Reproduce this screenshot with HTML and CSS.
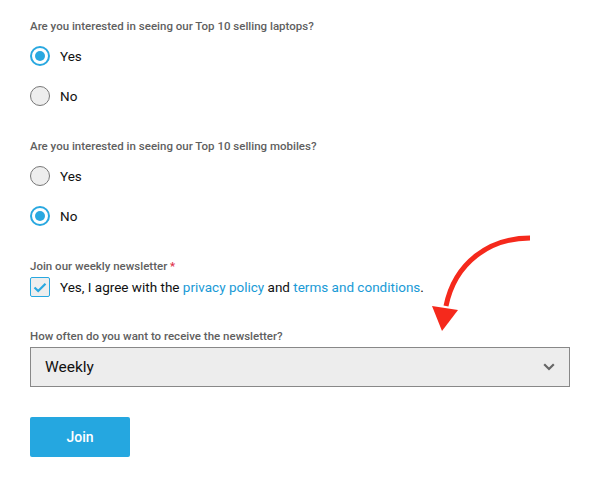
FILE: index.html
```html
<!DOCTYPE html>
<html>
<head>
<meta charset="utf-8">
<link rel="stylesheet" href="styles.css">
</head>
<body>
<form class="form">
  <fieldset class="group">
    <legend class="label">Are you interested in seeing our Top 10 selling laptops?</legend>
    <label class="option"><span class="radio checked"></span><span>Yes</span></label>
    <label class="option"><span class="radio"></span><span>No</span></label>
  </fieldset>
  <fieldset class="group">
    <legend class="label">Are you interested in seeing our Top 10 selling mobiles?</legend>
    <label class="option"><span class="radio"></span><span>Yes</span></label>
    <label class="option"><span class="radio checked"></span><span>No</span></label>
  </fieldset>
  <div class="group news">
    <div class="label">Join our weekly newsletter <span class="req">*</span></div>
    <label class="check-row">
      <span class="checkbox"><svg width="14" height="11" viewBox="0 0 14 11"><path d="M1.5 5.5 L5.2 9 L12.5 1.8" fill="none" stroke="#29a8e0" stroke-width="2.2"/></svg></span>
      <span>Yes, I agree with the <a class="link">privacy policy</a> and <a class="link">terms and conditions</a>.</span>
    </label>
  </div>
  <div class="group freq">
    <div class="label">How often do you want to receive the newsletter?</div>
    <div class="select">
      <span>Weekly</span>
      <svg class="chev" width="12" height="8" viewBox="0 0 12 8"><path d="M1.2 1.3 L6 6 L10.8 1.3" fill="none" stroke="#666" stroke-width="2.2"/></svg>
    </div>
  </div>
  <button type="button" class="btn">Join</button>
</form>
<svg class="arrow" width="600" height="483" viewBox="0 0 600 483">
  <path d="M530 238 C490 238 455 262 446 306" fill="none" stroke="#f5291c" stroke-width="5"/>
  <path d="M432 306 L458 310 L442 331 Z" fill="#f5291c"/>
</svg>
</body>
</html>
```
FILE: styles.css
```css
html, body {
  margin: 0;
  padding: 0;
  background: #fff;
}
body {
  font-family: Roboto, "Liberation Sans", sans-serif;
  color: #111;
  position: relative;
  width: 600px;
  height: 483px;
  overflow: hidden;
}
.form {
  padding: 18px 30px 0 30px;
}
.group {
  border: 0;
  margin: 0;
  padding: 0;
}
.label {
  font-size: 11.5px;
  font-weight: 500;
  color: #5f5f5f;
  padding: 0;
  height: 16px;
  line-height: 16px;
}
.option {
  display: flex;
  align-items: center;
  gap: 10px;
  height: 20px;
  font-size: 13.5px;
  margin-top: 12px;
}
.option + .option {
  margin-top: 20px;
}
.group + .group {
  margin-top: 32px;
}
.radio {
  width: 20px;
  height: 20px;
  box-sizing: border-box;
  border-radius: 50%;
  border: 1px solid #777;
  background: #eee;
  position: relative;
  flex: none;
}
.radio.checked {
  border: 2px solid #29a8e0;
  background: #fff;
}
.radio.checked::after {
  content: "";
  position: absolute;
  left: 3px;
  top: 3px;
  width: 10px;
  height: 10px;
  border-radius: 50%;
  background: #29a8e0;
}
.check-row {
  display: flex;
  align-items: center;
  gap: 10px;
  font-size: 13.5px;
  margin-top: 3px;
  height: 20px;
}
.checkbox {
  width: 20px;
  height: 20px;
  box-sizing: border-box;
  border: 1px solid #29a8e0;
  border-radius: 2px;
  background: #eee;
  display: flex;
  align-items: center;
  justify-content: center;
  flex: none;
}
.req {
  color: #e0304a;
}
.link {
  color: #1a9ad6;
}
.group.news {
  margin-top: 32px;
}
.group.freq {
  margin-top: 31px;
}
.select {
  margin-top: 3px;
  height: 40px;
  box-sizing: border-box;
  border: 1px solid #888;
  background: #ededed;
  display: flex;
  align-items: center;
  justify-content: space-between;
  padding: 0 14px 0 14px;
  font-size: 15.5px;
  color: #111;
}
.btn {
  margin-top: 30px;
  width: 100px;
  height: 40px;
  border: 0;
  border-radius: 2px;
  background: #25a7e0;
  color: #fff;
  font-family: Roboto, "Liberation Sans", sans-serif;
  font-size: 14px;
  font-weight: 500;
  display: block;
}
.arrow {
  position: absolute;
  left: 0;
  top: 0;
  pointer-events: none;
}
```
